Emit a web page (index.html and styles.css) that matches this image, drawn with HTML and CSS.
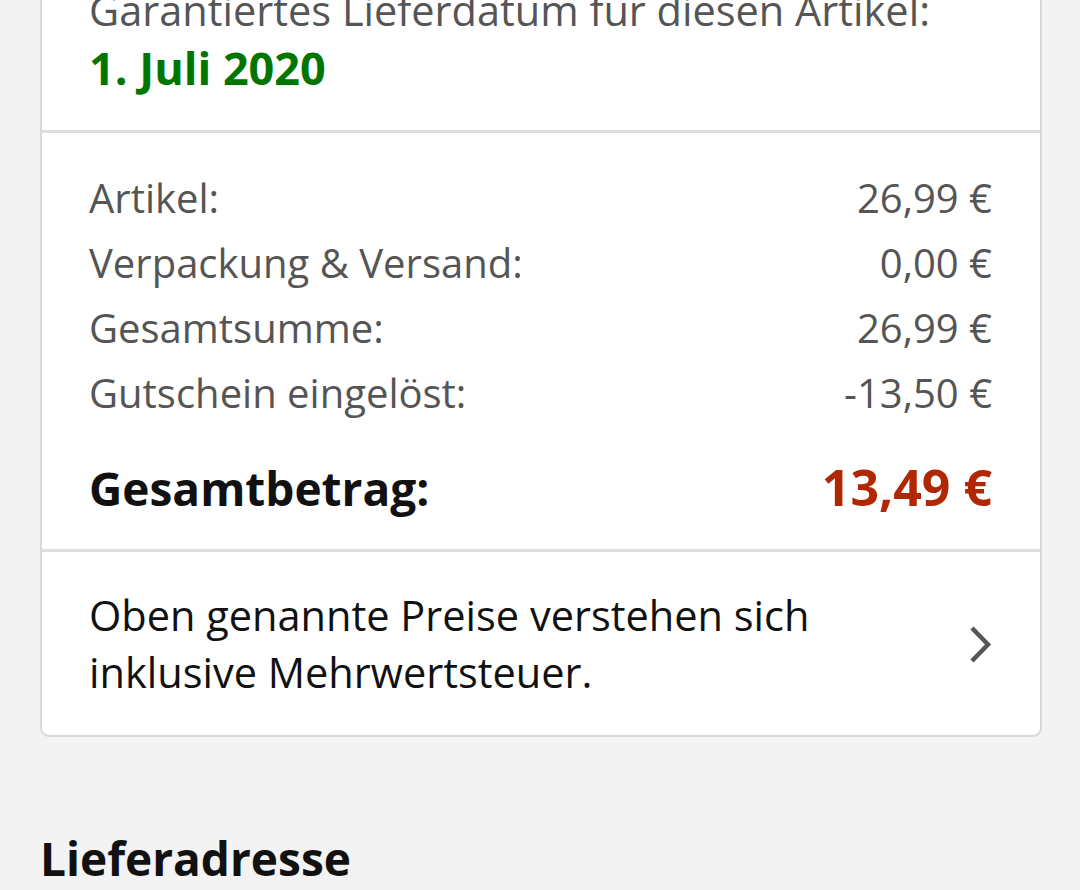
FILE: index.html
```html
<!DOCTYPE html>
<html lang="de">
<head>
<meta charset="utf-8">
<link rel="stylesheet" href="styles.css">
</head>
<body>
<div class="page">
  <div class="card">
    <section class="delivery">
      <div class="delivery-label">Garantiertes Lieferdatum für diesen Artikel:</div>
      <div class="delivery-date">1. Juli 2020</div>
    </section>
    <section class="summary">
      <div class="row"><span>Artikel:</span><span>26,99 €</span></div>
      <div class="row"><span>Verpackung &amp; Versand:</span><span>0,00 €</span></div>
      <div class="row"><span>Gesamtsumme:</span><span>26,99 €</span></div>
      <div class="row"><span>Gutschein eingelöst:</span><span>-13,50 €</span></div>
      <div class="row total"><span>Gesamtbetrag:</span><span class="total-price">13,49 €</span></div>
    </section>
    <section class="vat">
      <div class="vat-text">Oben genannte Preise verstehen sich inklusive Mehrwertsteuer.</div>
      <svg class="chevron" width="26" height="41" viewBox="0 0 26 41"><path d="M4 4 L20 20.5 L4 37" fill="none" stroke="#555" stroke-width="4.5"/></svg>
    </section>
  </div>
  <h2 class="section-title">Lieferadresse</h2>
</div>
</body>
</html>
```
FILE: styles.css
```css
html, body {
  margin: 0;
  padding: 0;
  background: #f3f3f3;
}
body {
  font-family: "Open Sans", "Noto Sans", sans-serif;
  color: #111;
  overflow: hidden;
}
.page {
  margin-top: -31px;
  padding: 0 38px 0 40px;
}
.card {
  background: #fff;
  border: 2px solid #d8d8d8;
  border-radius: 0 0 9px 9px;
}
.delivery {
  padding: 10px 48px 33px 47px;
  border-bottom: 3px solid #dedede;
}
.delivery-label {
  font-size: 41.5px;
  line-height: 58px;
  color: #555;
  white-space: nowrap;
}
.delivery-date {
  font-size: 45px;
  line-height: 58px;
  font-weight: 700;
  color: #007600;
}
.summary {
  padding: 32px 48px 28px 47px;
  border-bottom: 3px solid #dedede;
}
.row {
  display: flex;
  justify-content: space-between;
  align-items: baseline;
  font-size: 40px;
  line-height: 65px;
  color: #555;
}
.row.total {
  margin-top: 30px;
  font-size: 46px;
  font-weight: 700;
  color: #111;
}
.total-price {
  font-size: 50px;
  color: #b12704;
}
.vat {
  display: flex;
  align-items: center;
  justify-content: space-between;
  padding: 35px 46px 34px 47px;
}
.vat-text {
  width: 780px;
  font-size: 41.5px;
  line-height: 57px;
  color: #111;
}
.chevron {
  flex: none;
}
.section-title {
  margin: 90px 0 0 0;
  font-size: 46px;
  font-weight: 700;
  color: #111;
}
```
